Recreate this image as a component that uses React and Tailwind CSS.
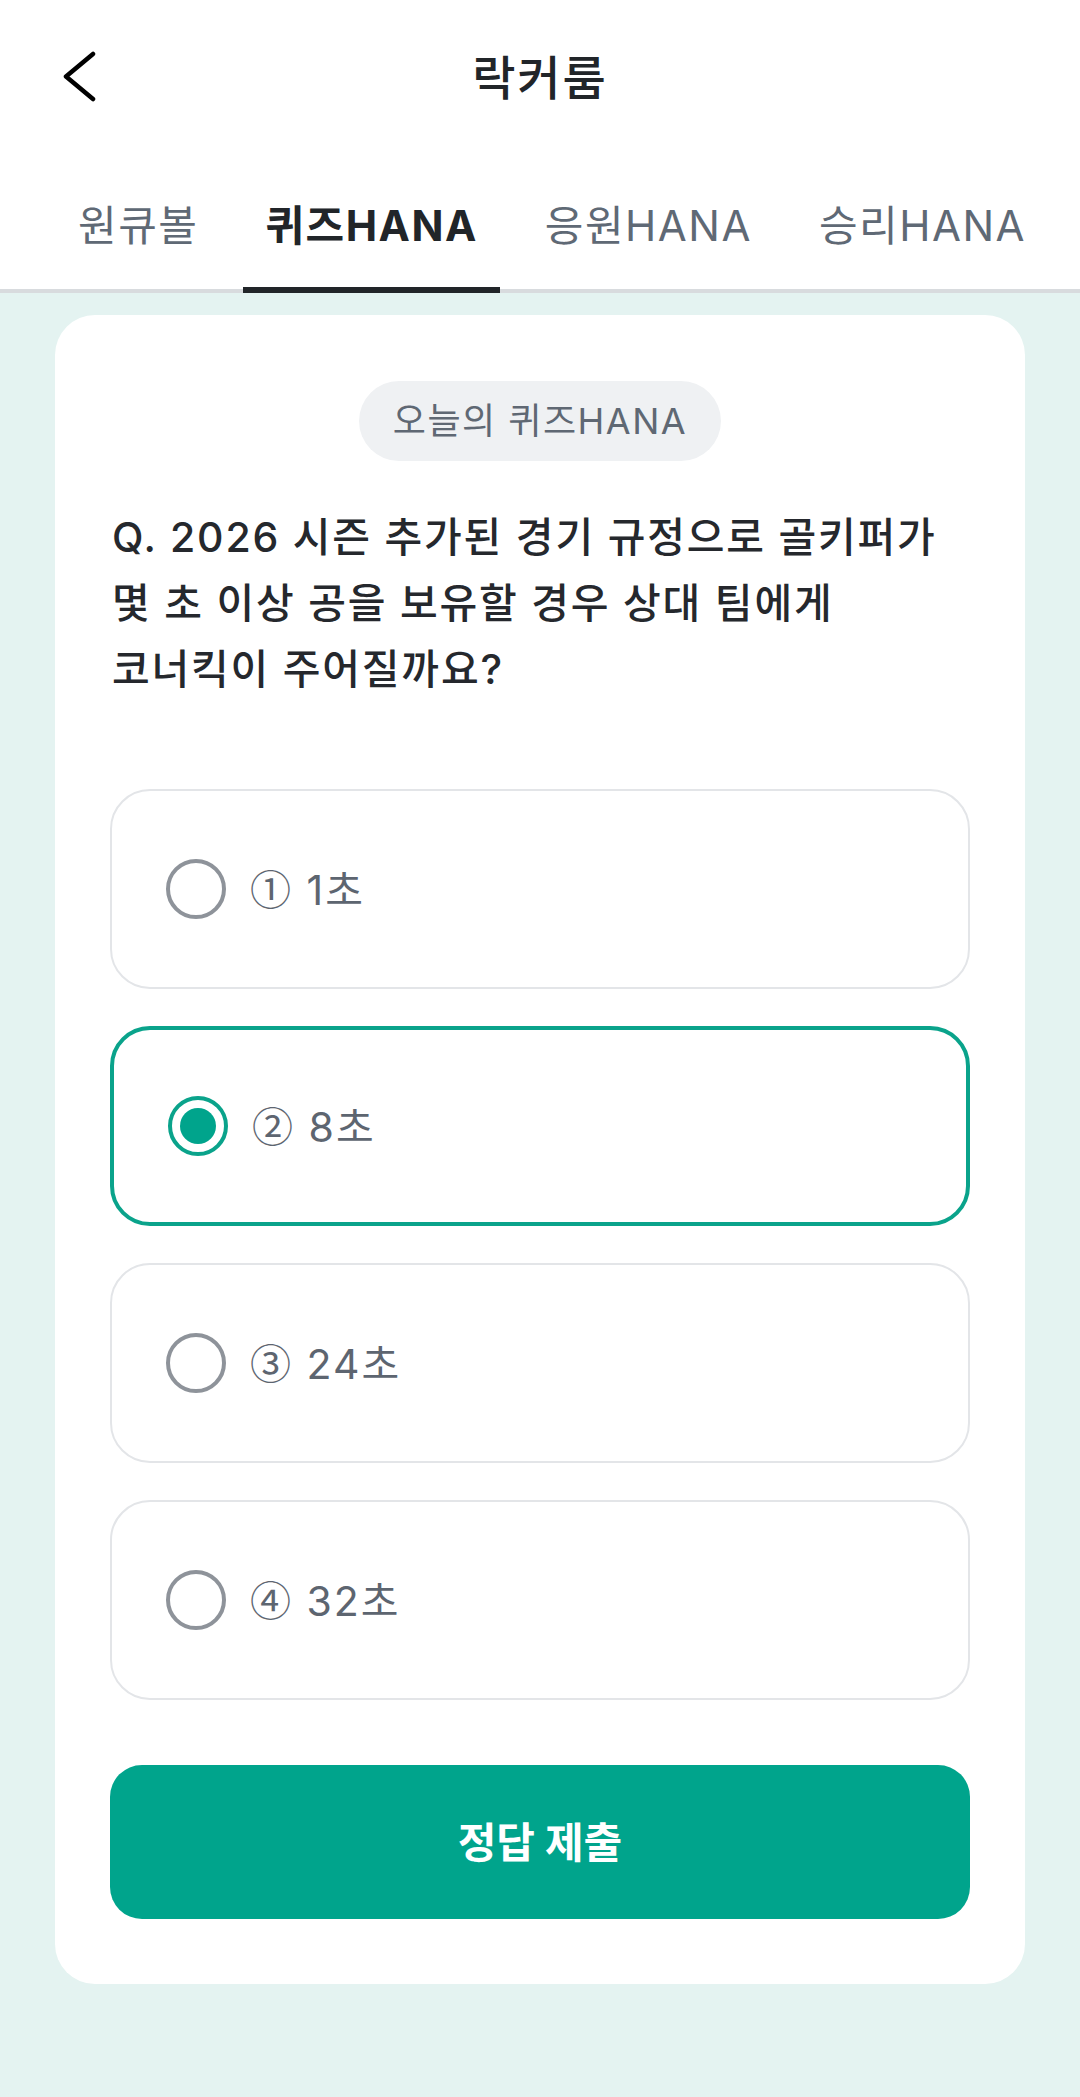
import React, { useState } from 'react'

const tabs = ['원큐볼', '퀴즈HANA', '응원HANA', '승리HANA']

const options = [
  { mark: '①', label: '1초' },
  { mark: '②', label: '8초' },
  { mark: '③', label: '24초' },
  { mark: '④', label: '32초' },
]

function Radio({ checked }) {
  if (checked) {
    return (
      <span className="w-[60px] h-[60px] rounded-full border-[4px] border-[#0aa38b] flex items-center justify-center shrink-0">
        <span className="w-[36px] h-[36px] rounded-full bg-[#00a48c]"></span>
      </span>
    )
  }
  return <span className="w-[60px] h-[60px] rounded-full border-[4px] border-[#8e939a] shrink-0"></span>
}

export default function App() {
  const [active, setActive] = useState(1)
  const [picked, setPicked] = useState(1)

  return (
    <div className="min-h-screen bg-[#e4f3f1] font-['Inter','Noto_Sans_CJK_KR',sans-serif]">
      <div className="bg-white">
        <div className="grid grid-cols-[1fr_auto_1fr] items-center h-[154px] px-[62px]">
          <button className="w-[34px] h-[52px] flex items-center">
            <svg width="34" height="52" viewBox="0 0 34 52" fill="none">
              <polyline points="31,3 4,25.5 31,48" stroke="#000" strokeWidth="4.5" strokeLinecap="round" strokeLinejoin="round" />
            </svg>
          </button>
          <h1 className="text-[47px] leading-none tracking-[2px] text-[#212529] font-medium">락커룸</h1>
          <div></div>
        </div>

        <div className="flex gap-[23px] pl-[56px] border-b-[4px] border-[#d8dbde]">
          {tabs.map((t, i) => (
            <button
              key={t}
              onClick={() => setActive(i)}
              className={`relative h-[135px] px-[22px] pt-[8px] flex items-center text-[42px] leading-none tracking-[1.5px] whitespace-nowrap ${
                i === active ? 'font-bold text-[#212529]' : 'text-[#5f6975]'
              }`}
            >
              {t}
              {i === active && <span className="absolute left-0 right-0 bottom-[-4px] h-[6px] bg-[#212529]"></span>}
            </button>
          ))}
        </div>
      </div>

      <div className="px-[55px] pt-[22px] pb-[111px]">
        <div className="bg-white rounded-[40px] px-[55px] pt-[66px] pb-[65px]">
          <div className="flex justify-center">
            <span className="h-[80px] px-[34px] rounded-full bg-[#eff1f3] text-[#5f6873] text-[36px] tracking-[1.5px] flex items-center">
              오늘의 퀴즈HANA
            </span>
          </div>

          <p className="mt-[43px] text-[41px] leading-[66px] tracking-[1.8px] text-[#25282d] font-medium pl-[2px]">
            Q. 2026 시즌 추가된 경기 규정으로 골키퍼가<br />
            몇 초 이상 공을 보유할 경우 상대 팀에게<br />
            코너킥이 주어질까요?
          </p>

          <div className="mt-[87px] flex flex-col gap-[37px]">
            {options.map((o, i) => (
              <button
                key={o.label}
                onClick={() => setPicked(i)}
                className={`h-[200px] rounded-[40px] bg-white flex items-center gap-[24px] pl-[54px] text-left ${
                  picked === i ? 'border-[4px] border-[#0aa38b]' : 'border-[2px] border-[#e3e5e8]'
                }`}
              >
                <Radio checked={picked === i} />
                <span className="text-[41px] leading-none tracking-[2px] text-[#5d6570]">
                  <span className="font-['Noto_Sans_CJK_KR',sans-serif]">{o.mark}</span> {o.label}
                </span>
              </button>
            ))}
          </div>

          <button className="mt-[65px] w-full h-[154px] rounded-[32px] bg-[#00a48c] text-white text-[42px] font-bold">
            정답 제출
          </button>
        </div>
      </div>
    </div>
  )
}
